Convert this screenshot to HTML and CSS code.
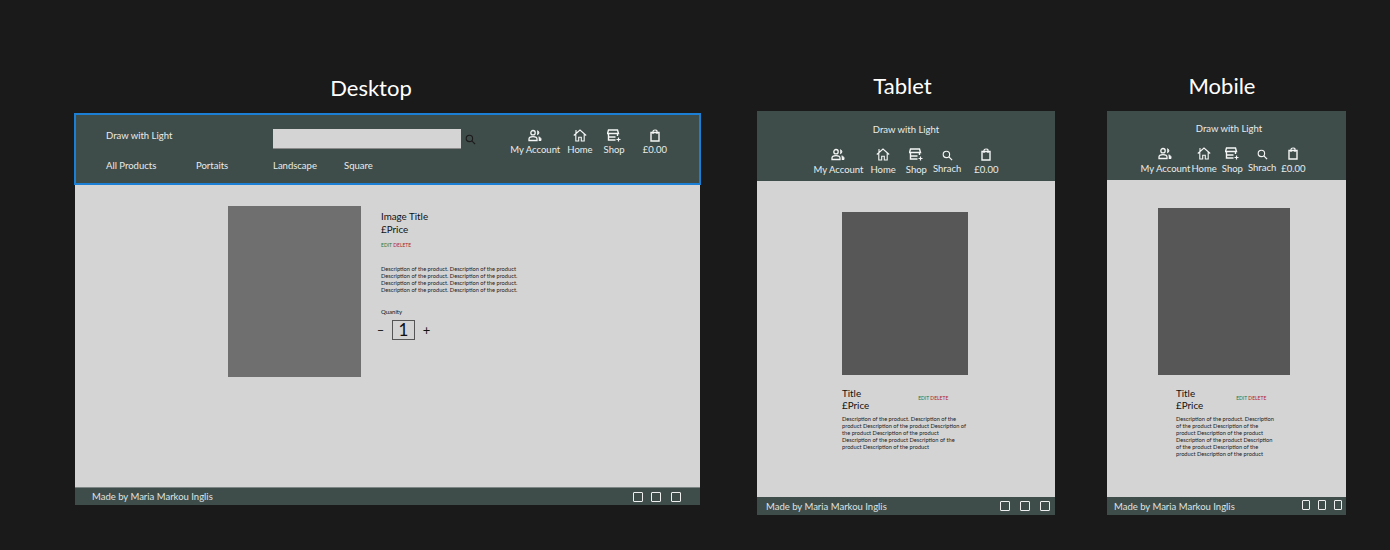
FILE: index.html
```html
<!DOCTYPE html>
<html lang="en">
  <head>
    <meta charset="UTF-8">
    <meta name="viewport" content="width=device-width, initial-scale=1.0">
    <title>Draw with Light wireframes</title>
    <link rel="stylesheet" href="styles.css">
  </head>
  <body>
    <svg class="sprite" aria-hidden="true">
      <symbol id="i-account" viewBox="0 0 14 12">
        <circle cx="5" cy="3.2" r="2.2" fill="none" stroke="currentColor" stroke-width="1.3"/>
        <path d="M1 11V9.6C1 8 2.6 7.2 5 7.2S9 8 9 9.6V11Z" fill="none" stroke="currentColor" stroke-width="1.3"/>
        <path d="M9.2 1.2a2.1 2.1 0 0 1 0 4.1M10.6 7.4c1.5.4 2.4 1.1 2.4 2.3V11h-2.2" fill="currentColor" stroke="currentColor"/>
      </symbol>
      <symbol id="i-home" viewBox="0 0 14 13">
        <path d="M.8 6.5 7 1l6.2 5.5M2.8 5.2V12h2.9V8.2h2.6V12h2.9V5.2M3 1v3" fill="none" stroke="currentColor" stroke-width="1.1"/>
      </symbol>
      <symbol id="i-shop" viewBox="0 0 14 13">
        <path d="M1.5 1h9l1 3.5h-11ZM1.5 4.5V11h7M10.5 4.5V7M1.5 8h7" fill="none" stroke="currentColor" stroke-width="1.4"/>
        <path d="M11.5 8.5v4M9.5 10.5h4" stroke="currentColor" stroke-width="1.2"/>
      </symbol>
      <symbol id="i-search" viewBox="0 0 12 12">
        <circle cx="4.8" cy="4.8" r="3.5" fill="none" stroke="currentColor" stroke-width="1.2"/>
        <path d="M7.5 7.5 11 11" stroke="currentColor" stroke-width="1.4"/>
      </symbol>
      <symbol id="i-bag" viewBox="0 0 10 13">
        <path d="M1 3.5h8V12H1Z" fill="none" stroke="currentColor" stroke-width="1.4"/>
        <path d="M3 5V2.2C3 1.3 3.8 1 5 1s2 .3 2 1.2V5" fill="none" stroke="currentColor" stroke-width="1.2"/>
      </symbol>
    </svg>

    <div class="board">
      <!-- Desktop -->
      <section class="col col-desktop">
        <h2 class="device-name">Desktop</h2>
        <div class="frame">
          <header class="top top-desktop">
            <div class="top-left">
              <div class="brand-row">
                <span class="brand">Draw with Light</span>
                <span class="search-box"></span>
                <svg class="search-icon"><use href="#i-search"/></svg>
              </div>
              <nav class="cat-nav">
                <a href="#" class="cat-all">All Products</a>
                <a href="#" class="cat-port">Portaits</a>
                <a href="#" class="cat-land">Landscape</a>
                <a href="#">Square</a>
              </nav>
            </div>
            <div class="icon-nav icon-nav-desktop">
              <a href="#" class="icon-link"><svg class="ic"><use href="#i-account"/></svg>My Account</a>
              <a href="#" class="icon-link"><svg class="ic"><use href="#i-home"/></svg>Home</a>
              <a href="#" class="icon-link"><svg class="ic"><use href="#i-shop"/></svg>Shop</a>
              <a href="#" class="icon-link"><svg class="ic"><use href="#i-bag"/></svg>£0.00</a>
            </div>
          </header>
          <main class="body body-desktop">
            <div class="photo photo-desktop"></div>
            <div class="info">
              <div class="title">Image Title</div>
              <div class="title">£Price</div>
              <div class="actions actions-desktop"><span class="edit">EDIT</span> <span class="delete">DELETE</span></div>
              <p class="desc desc-desktop">Description of the product. Description of the product<br>Description of the product. Description of the product.<br>Description of the product. Description of the product.<br>Description of the product. Description of the product.</p>
              <div class="qty-label">Quanity</div>
              <div class="qty">
                <span class="qty-sign">–</span>
                <span class="qty-box">1</span>
                <span class="qty-sign">+</span>
              </div>
            </div>
          </main>
          <footer class="foot foot-desktop">
            <span>Made by Maria Markou Inglis</span>
            <div class="socials socials-desktop"><i></i><i></i><i></i></div>
          </footer>
        </div>
      </section>

      <!-- Tablet -->
      <section class="col col-tablet">
        <h2 class="device-name">Tablet</h2>
        <div class="frame">
          <header class="top top-small top-tablet">
            <div class="brand">Draw with Light</div>
            <div class="icon-nav icon-nav-tablet">
              <a href="#" class="icon-link"><svg class="ic"><use href="#i-account"/></svg>My Account</a>
              <a href="#" class="icon-link"><svg class="ic"><use href="#i-home"/></svg>Home</a>
              <a href="#" class="icon-link"><svg class="ic"><use href="#i-shop"/></svg>Shop</a>
              <a href="#" class="icon-link search-link"><svg class="ic"><use href="#i-search"/></svg>Shrach</a>
              <a href="#" class="icon-link"><svg class="ic"><use href="#i-bag"/></svg>£0.00</a>
            </div>
          </header>
          <main class="body body-tablet">
            <div class="photo photo-tablet"></div>
            <div class="info-small info-tablet">
              <div class="title-row">
                <div>
                  <div class="title">Title</div>
                  <div class="title">£Price</div>
                </div>
                <div class="actions actions-tablet"><span class="edit">EDIT</span> <span class="delete">DELETE</span></div>
              </div>
              <p class="desc desc-small">Description of the product. Description of the<br>product Description of the product Description of<br>the product Description of the product<br>Description of the product Description of the<br>product Description of the product</p>
            </div>
          </main>
          <footer class="foot foot-small">
            <span>Made by Maria Markou Inglis</span>
            <div class="socials socials-tablet"><i></i><i></i><i></i></div>
          </footer>
        </div>
      </section>

      <!-- Mobile -->
      <section class="col col-mobile">
        <h2 class="device-name">Mobile</h2>
        <div class="frame">
          <header class="top top-small top-mobile">
            <div class="brand">Draw with Light</div>
            <div class="icon-nav icon-nav-mobile">
              <a href="#" class="icon-link"><svg class="ic"><use href="#i-account"/></svg>My Account</a>
              <a href="#" class="icon-link"><svg class="ic"><use href="#i-home"/></svg>Home</a>
              <a href="#" class="icon-link"><svg class="ic"><use href="#i-shop"/></svg>Shop</a>
              <a href="#" class="icon-link search-link"><svg class="ic"><use href="#i-search"/></svg>Shrach</a>
              <a href="#" class="icon-link"><svg class="ic"><use href="#i-bag"/></svg>£0.00</a>
            </div>
          </header>
          <main class="body body-mobile">
            <div class="photo photo-mobile"></div>
            <div class="info-small info-mobile">
              <div class="title-row">
                <div>
                  <div class="title">Title</div>
                  <div class="title">£Price</div>
                </div>
                <div class="actions actions-mobile"><span class="edit">EDIT</span> <span class="delete">DELETE</span></div>
              </div>
              <p class="desc desc-small">Description of the product. Description<br>of the product Description of the<br>product Description of the product<br>Description of the product Description<br>of the product Description of the<br>product Description of the product</p>
            </div>
          </main>
          <footer class="foot foot-small">
            <span>Made by Maria Markou Inglis</span>
            <div class="socials socials-mobile"><i></i><i></i><i></i></div>
          </footer>
        </div>
      </section>
    </div>
  </body>
</html>
```

FILE: styles.css
```css
* {
  box-sizing: border-box;
}

html,
body {
  height: 100%;
}

body {
  margin: 0;
  background-color: #1a1a1a;
  color: #111;
  font-family: Lato, "Liberation Sans", sans-serif;
  overflow: hidden;
}

a {
  color: inherit;
  text-decoration: none;
}

.sprite {
  display: none;
}

.board {
  display: flex;
  align-items: flex-start;
  padding: 72px 0 0 74px;
}

.col {
  display: flex;
  flex-direction: column;
}

.col-desktop {
  width: 627px;
  margin-right: 56px;
}

.col-tablet {
  width: 298px;
  margin-right: 52px;
}

.col-mobile {
  width: 239px;
}

.device-name {
  margin: 0;
  color: #fff;
  font-size: 22px;
  font-weight: 400;
  line-height: 32px;
  text-align: center;
}

.col-desktop .device-name {
  height: 41px;
  padding-right: 33px;
}

.col-tablet .device-name,
.col-mobile .device-name {
  height: 39px;
  margin-top: -2px;
  margin-bottom: 2px;
}

.col-tablet .device-name {
  padding-right: 7px;
}

.col-mobile .device-name {
  padding-right: 9px;
}

.frame {
  display: flex;
  flex-direction: column;
}

.col-desktop .frame {
  height: 392px;
}

.col-tablet .frame,
.col-mobile .frame {
  height: 404px;
}

/* headers */
.top {
  background-color: #3f4d4a;
  color: #e8ecea;
  font-size: 9.5px;
}

.top-desktop {
  display: flex;
  justify-content: space-between;
  height: 72px;
  padding: 14px 32px 0 30px;
  border: 2px solid #1b7fd6;
}

.brand-row {
  display: flex;
  align-items: center;
  height: 20px;
}

.brand-row .brand {
  width: 167px;
  margin-top: -8px;
}

.search-box {
  width: 188px;
  height: 20px;
  background-color: #d4d4d4;
  border-bottom: 1px solid #8a8a8a;
}

.search-icon {
  width: 11px;
  height: 11px;
  margin-left: 4px;
  color: #1c1c1c;
}

.cat-nav {
  display: flex;
  margin-top: 11px;
  line-height: 12px;
}

.cat-all {
  width: 90px;
}

.cat-port {
  width: 77px;
}

.cat-land {
  width: 71px;
}

.icon-nav {
  display: flex;
}

.icon-link {
  display: flex;
  flex-direction: column;
  align-items: center;
  line-height: 12px;
  white-space: nowrap;
}

.ic {
  width: 14px;
  height: 13px;
  margin-bottom: 3px;
  color: #f4f6f5;
}

.icon-nav-desktop {
  height: 40px;
  gap: 7px;
}

.icon-nav-desktop .ic {
  margin-bottom: 2px;
}

.icon-nav-desktop .icon-link:nth-child(3) {
  margin-left: 4px;
}

.icon-nav-desktop .icon-link:nth-child(4) {
  margin-left: 11px;
}

.top-small {
  display: flex;
  flex-direction: column;
  align-items: center;
}

.top-tablet {
  height: 70px;
  padding-top: 13px;
}

.top-mobile {
  height: 69px;
  padding-top: 12px;
}

.top-mobile .brand {
  margin-left: 5px;
}

.icon-nav-tablet {
  margin-top: 13px;
}

.icon-nav-tablet .icon-link:nth-child(2) {
  margin-left: 7px;
}

.icon-nav-tablet .icon-link:nth-child(3) {
  margin-left: 10px;
}

.icon-nav-tablet .icon-link:nth-child(4) {
  margin-left: 6px;
}

.icon-nav-tablet .icon-link:nth-child(5) {
  margin-left: 13px;
}

.icon-nav-mobile {
  margin-top: 13px;
  margin-right: 7px;
  gap: 5px;
}

.icon-nav-mobile .icon-link:nth-child(2) {
  margin-left: -4px;
}

/* the search icon sits lower and smaller, its label a pixel higher */
.search-link .ic {
  width: 11px;
  height: 11px;
  margin-top: 2px;
  margin-bottom: 2px;
}

/* product */
.body {
  flex: 1;
  display: flex;
  background-color: #d4d4d4;
}

.body-desktop {
  margin: 0 1px;
  padding: 21px 0 0 153px;
  align-items: flex-start;
}

.photo-desktop {
  width: 133px;
  height: 171px;
  background-color: #6f6f6f;
}

.info {
  margin-left: 20px;
  padding-top: 4px;
}

.title {
  font-size: 9.8px;
  line-height: 13px;
}

.actions {
  font-size: 5px;
  line-height: 7px;
  white-space: nowrap;
}

.edit {
  color: #1e7a42;
}

.delete {
  color: #b0232d;
}

.actions-desktop {
  margin-top: 6px;
}

.desc {
  margin: 0;
  font-size: 5.7px;
  line-height: 7px;
  color: #1c1c1c;
  white-space: nowrap;
}

.desc-desktop {
  margin-top: 16px;
}

.qty-label {
  margin-top: 15px;
  font-size: 6px;
  line-height: 8px;
}

.qty {
  display: flex;
  align-items: center;
  gap: 7px;
  margin-top: 4px;
  margin-left: -5px;
}

.qty-sign {
  width: 9px;
  font-size: 13px;
  text-align: center;
}

.qty-box {
  width: 23px;
  height: 20px;
  border: 1px solid #555;
  font-size: 17px;
  line-height: 18px;
  text-align: center;
}

.body-tablet,
.body-mobile {
  flex-direction: column;
}

.photo-tablet {
  width: 126px;
  height: 163px;
  margin: 31px 0 0 85px;
  background-color: #575757;
}

.photo-mobile {
  width: 132px;
  height: 167px;
  margin: 28px 0 0 51px;
  background-color: #575757;
}

.info-tablet {
  margin: 12px 0 0 85px;
}

.info-mobile {
  margin: 12px 0 0 69px;
}

.info-small .title {
  line-height: 12px;
}

.title-row {
  display: flex;
  white-space: nowrap;
}

.actions-tablet {
  margin: 8px 0 0 49px;
}

.actions-mobile {
  margin: 8px 0 0 33px;
}

.desc-small {
  margin-top: 4px;
}

/* footers */
.foot {
  display: flex;
  justify-content: space-between;
  align-items: center;
  height: 18px;
  background-color: #3f4d4a;
  color: #dfe3e1;
  font-size: 9.5px;
}

.foot-desktop {
  margin: 0 1px;
  padding: 0 19px 0 17px;
  border-top: 1px solid #7c8583;
}

.foot-small {
  padding: 0 5px 0 9px;
}

.col-mobile .foot-small {
  padding: 0 4px 0 7px;
}

.socials {
  display: flex;
}

.socials i {
  display: block;
  width: 10px;
  height: 10px;
  border: 1px solid #eef0ef;
  border-radius: 1px;
}

.socials-desktop {
  gap: 8px;
}

.socials-desktop i:last-child {
  margin-left: 2px;
}

.socials-tablet {
  gap: 10px;
}

.socials-mobile {
  gap: 8px;
  margin-top: -3px;
}

.socials-mobile i {
  width: 8px;
}
```
